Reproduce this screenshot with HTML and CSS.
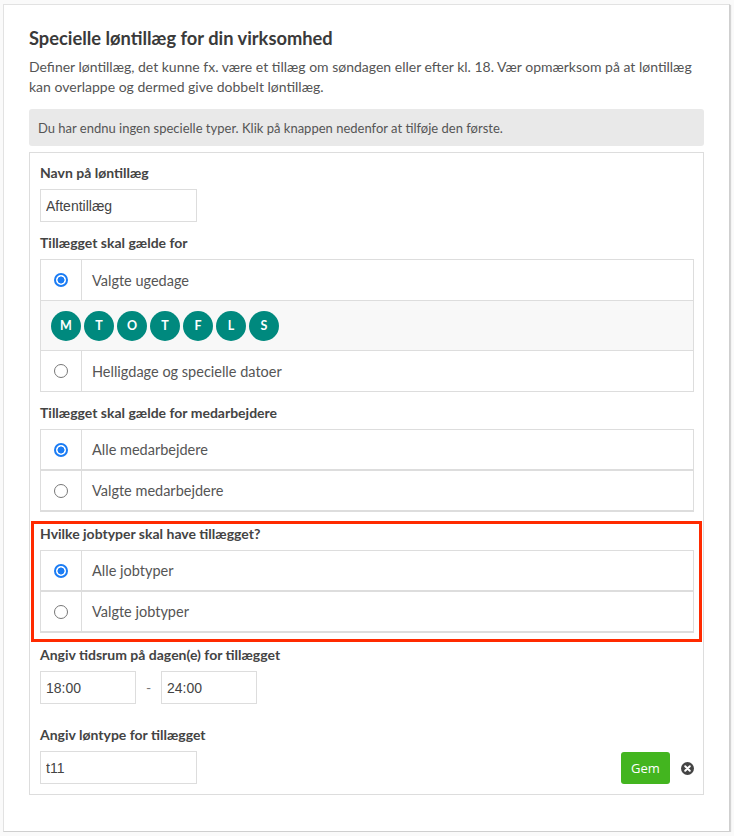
FILE: index.html
```html
<!DOCTYPE html>
<html lang="da">
<head>
<meta charset="utf-8">
<title>Specielle løntillæg</title>
<link rel="stylesheet" href="styles.css">
</head>
<body>
<div class="card">
  <h1 class="title">Specielle løntillæg for din virksomhed</h1>
  <p class="desc">Definer løntillæg, det kunne fx. være et tillæg om søndagen eller efter kl. 18. Vær opmærksom på at løntillæg kan overlappe og dermed give dobbelt løntillæg.</p>
  <div class="info">Du har endnu ingen specielle typer. Klik på knappen nedenfor at tilføje den første.</div>
  <div class="panel">
    <div class="group">
      <div class="label">Navn på løntillæg</div>
      <input class="field w-name" type="text" value="Aftentillæg" readonly>
    </div>

    <div class="group">
      <div class="label">Tillægget skal gælde for</div>
      <div class="table">
        <div class="row">
          <div class="rcell"><span class="radio on"></span></div>
          <div class="tcell">Valgte ugedage</div>
        </div>
        <div class="days">
          <span class="day">M</span><span class="day">T</span><span class="day">O</span><span class="day">T</span><span class="day">F</span><span class="day">L</span><span class="day">S</span>
        </div>
        <div class="row">
          <div class="rcell"><span class="radio"></span></div>
          <div class="tcell">Helligdage og specielle datoer</div>
        </div>
      </div>
    </div>

    <div class="group">
      <div class="label">Tillægget skal gælde for medarbejdere</div>
      <div class="options">
        <div class="opt">
          <div class="rcell"><span class="radio on"></span></div>
          <div class="tcell">Alle medarbejdere</div>
        </div>
        <div class="opt">
          <div class="rcell"><span class="radio"></span></div>
          <div class="tcell">Valgte medarbejdere</div>
        </div>
      </div>
    </div>

    <div class="group highlight">
      <div class="label">Hvilke jobtyper skal have tillægget?</div>
      <div class="options">
        <div class="opt">
          <div class="rcell"><span class="radio on"></span></div>
          <div class="tcell">Alle jobtyper</div>
        </div>
        <div class="opt">
          <div class="rcell"><span class="radio"></span></div>
          <div class="tcell">Valgte jobtyper</div>
        </div>
      </div>
    </div>

    <div class="group after-highlight">
      <div class="label">Angiv tidsrum på dagen(e) for tillægget</div>
      <div class="times">
        <input class="field w-time" type="text" value="18:00" readonly>
        <span class="dash">-</span>
        <input class="field w-time" type="text" value="24:00" readonly>
      </div>
    </div>

    <div class="group wide-gap">
      <div class="label">Angiv løntype for tillægget</div>
      <div class="last-row">
        <input class="field w-name" type="text" value="t11" readonly>
        <div class="actions">
          <button class="btn-save" type="button">Gem</button>
          <span class="close" aria-label="Luk">
            <svg width="13" height="13" viewBox="0 0 13 13"><circle cx="6.5" cy="6.5" r="6.5" fill="#444"/><path d="M4.2 4.2 L8.8 8.8 M8.8 4.2 L4.2 8.8" stroke="#fff" stroke-width="2" stroke-linecap="round"/></svg>
          </span>
        </div>
      </div>
    </div>
  </div>
</div>
</body>
</html>
```

FILE: styles.css
```css
* { box-sizing: border-box; }

body {
  margin: 0;
  padding: 4px 0 0 3px;
  background: #fafafa;
  font-family: Lato, "Open Sans", sans-serif;
  color: #333;
}

.card {
  width: 727px;
  height: 828px;
  background: #fff;
  border: 1px solid #e2e2e2;
  border-right-color: #cfcfcf;
  border-bottom-color: #cfcfcf;
  box-shadow: 1px 1px 1px #d4d4d4;
  padding: 21px 25px 0 25px;
}

.title {
  margin: 0;
  font-size: 18.3px;
  line-height: 24px;
  font-weight: 700;
  color: #3a3a3a;
}

.desc {
  margin: 7px 0 0;
  font-size: 14px;
  line-height: 20px;
  color: #555;
}

.info {
  margin-top: 12px;
  height: 37px;
  background: #e9e9e9;
  border-radius: 3px;
  padding: 0 9px;
  display: flex;
  align-items: center;
  font-size: 13px;
  color: #555;
}

.panel {
  margin-top: 6px;
  border: 1px solid #ddd;
  padding: 11px 9px 10px 10px;
}

.group { margin-top: 12px; }
.group:first-child { margin-top: 0; }
.group.highlight {
  margin: 9px -8px 0 -9px;
  border: 3px solid #ff2a00;
  padding: 1px 5px 6px 6px;
}
.group.after-highlight { margin-top: 4px; }
.group.wide-gap { margin-top: 22px; }

.label {
  font-size: 14px;
  line-height: 18px;
  font-weight: 700;
  color: #444;
  margin-bottom: 7px;
}

.field {
  display: block;
  height: 33px;
  border: 1px solid #ddd;
  border-radius: 0;
  padding: 0 5px;
  font-family: "Liberation Sans", Arial, sans-serif;
  font-size: 14px;
  color: #444;
  background: #fff;
  outline: none;
}
.w-name { width: 157px; }
.w-time { width: 96px; }

.table {
  border: 1px solid #ddd;
}
.row {
  display: flex;
  height: 40px;
}
.days {
  height: 51px;
  border-top: 1px solid #ddd;
  border-bottom: 1px solid #ddd;
  background: #f8f8f8;
  display: flex;
  align-items: center;
  gap: 3px;
  padding-left: 10px;
}
.day {
  width: 30px;
  height: 30px;
  border-radius: 50%;
  background: #00897e;
  color: #fff;
  font-size: 12.5px;
  font-weight: 700;
  display: flex;
  align-items: center;
  justify-content: center;
}

.options { display: flex; flex-direction: column; }
.opt {
  display: flex;
  height: 42px;
  border: 1px solid #ddd;
  border-bottom-width: 2px;
}
.opt + .opt { margin-top: -1px; }

.rcell {
  width: 41px;
  flex: none;
  border-right: 1px solid #ddd;
  display: flex;
  align-items: center;
  justify-content: center;
}
.tcell {
  display: flex;
  align-items: center;
  padding-left: 10px;
  font-size: 14.5px;
  color: #555;
}

.radio {
  width: 14px;
  height: 14px;
  border-radius: 50%;
  border: 1px solid #777;
  background: #fff;
}
.radio.on {
  border: 2px solid #1b7cf4;
  background: radial-gradient(circle, #1b7cf4 0, #1b7cf4 3.2px, #fff 3.8px);
}

.times {
  display: flex;
  align-items: center;
}
.dash {
  width: 25px;
  text-align: center;
  color: #777;
  font-size: 14px;
}

.last-row {
  display: flex;
  justify-content: space-between;
  align-items: flex-end;
}
.actions {
  display: flex;
  align-items: center;
  gap: 11px;
}
.btn-save {
  width: 49px;
  height: 32px;
  border: none;
  border-radius: 3px;
  background: #43b51f;
  color: #fff;
  font-family: "Open Sans", sans-serif;
  font-size: 13px;
  padding: 0;
}
.close {
  display: flex;
  width: 13px;
  height: 13px;
}
```
